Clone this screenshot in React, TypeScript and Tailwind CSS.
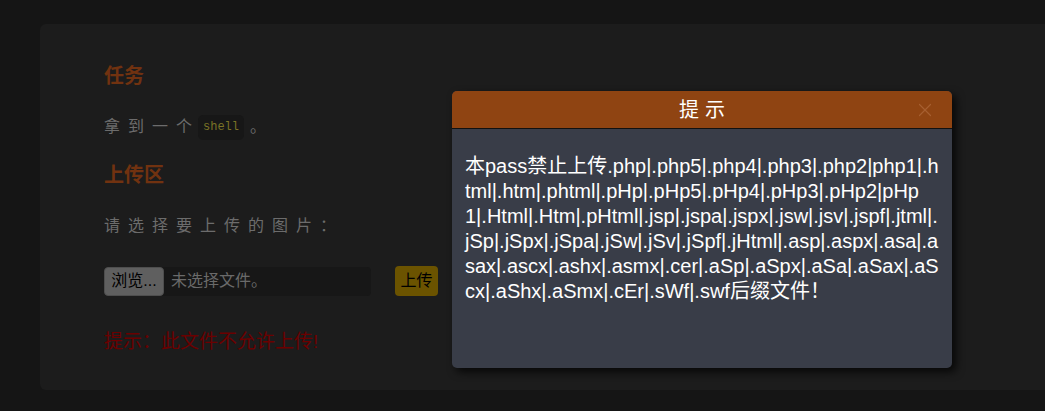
import { X } from 'lucide-react'

// wrapped exactly as the reference dialog shows it
const lines = [
  '本pass禁止上传.php|.php5|.php4|.php3|.php2|php1|.h',
  'tml|.htm|.phtml|.pHp|.pHp5|.pHp4|.pHp3|.pHp2|pHp',
  '1|.Html|.Htm|.pHtml|.jsp|.jspa|.jspx|.jsw|.jsv|.jspf|.jtml|.',
  'jSp|.jSpx|.jSpa|.jSw|.jSv|.jSpf|.jHtml|.asp|.aspx|.asa|.a',
  'sax|.ascx|.ashx|.asmx|.cer|.aSp|.aSpx|.aSa|.aSax|.aS',
  'cx|.aShx|.aSmx|.cEr|.sWf|.swf后缀文件！',
]

export default function App() {
  return (
    <div className="relative w-[1045px] h-[411px] overflow-hidden bg-[#151515] pt-6 pl-10 font-['Liberation_Sans','Noto_Sans_CJK_SC',sans-serif]">
      <div className="h-[366px] w-[1100px] rounded-md bg-[#1c1c1c] pl-16 pt-[38px]">
        <h2 className="text-[20px] font-bold leading-[28px] text-[#713210]">任务</h2>
        <p className="mt-[24px] flex items-center text-[16px] leading-[26px] tracking-[8px] text-[#6c6c6c]">
          拿到一个
          <code className="ml-[-2px] mr-[6px] rounded-[5px] bg-[#171717] px-[5px] py-[3px] font-['Liberation_Mono',monospace] text-[12px] leading-[19px] tracking-normal text-[#7a7326]">
            shell
          </code>
          。
        </p>
        <h2 className="mt-[21px] text-[20px] font-bold leading-[28px] text-[#713210]">上传区</h2>
        <p className="mt-[24px] text-[16px] leading-[26px] tracking-[8px] text-[#6c6c6c]">请选择要上传的图片：</p>
        <div className="mt-[27px] flex items-center">
          <div className="flex h-[29px] w-[267px] items-center rounded-[4px] bg-[#171717]">
            <span className="flex h-[29px] w-[60px] items-center justify-center rounded-[4px] border border-[#4e4e4e] bg-[#5f5f5f] text-[16px] text-black">
              浏览...
            </span>
            <span className="ml-[7px] text-[16px] text-[#6a6a6a]">未选择文件。</span>
          </div>
          <span className="ml-[24px] flex h-[30px] w-[43px] items-center justify-center rounded-[4px] bg-[#6b5300] text-[16px] text-black">
            上传
          </span>
        </div>
        <p className="mt-[33px] text-[19px] leading-[26px] text-[#6b0000]">提示：此文件不允许上传!</p>
      </div>

      <div className="absolute left-[452px] top-[91px] h-[277px] w-[500px] overflow-hidden rounded-[5px] bg-[#393d48] shadow-[4px_4px_8px_rgba(0,0,0,0.75)]">
        <div className="relative flex h-[38px] items-center justify-center border-b border-[#111] bg-[#8f4412] pl-[6px]">
          <span className="text-[20px] tracking-[6px] text-white">提示</span>
          <X className="absolute right-[16px] top-[8px] h-[22px] w-[22px] text-[#a65f30]" strokeWidth={1.3} />
        </div>
        <div className="px-[13px] pt-[25px] text-[20px] leading-[25px] text-white">
          {lines.map(l => (
            <div key={l} className="whitespace-nowrap">{l}</div>
          ))}
        </div>
      </div>
    </div>
  )
}
